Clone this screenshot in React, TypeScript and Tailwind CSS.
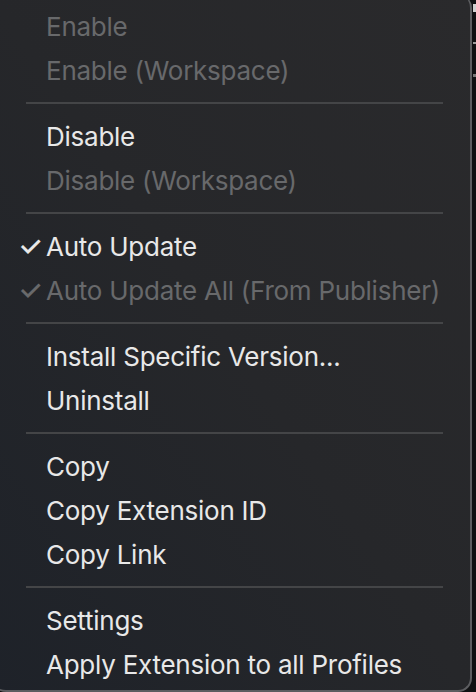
import React from 'react'

type Entry =
  | { kind: 'item'; label: string; disabled?: boolean; checked?: boolean }
  | { kind: 'sep' }

const entries: Entry[] = [
  { kind: 'item', label: 'Enable', disabled: true },
  { kind: 'item', label: 'Enable (Workspace)', disabled: true },
  { kind: 'sep' },
  { kind: 'item', label: 'Disable' },
  { kind: 'item', label: 'Disable (Workspace)', disabled: true },
  { kind: 'sep' },
  { kind: 'item', label: 'Auto Update', checked: true },
  { kind: 'item', label: 'Auto Update All (From Publisher)', checked: true, disabled: true },
  { kind: 'sep' },
  { kind: 'item', label: 'Install Specific Version...' },
  { kind: 'item', label: 'Uninstall' },
  { kind: 'sep' },
  { kind: 'item', label: 'Copy' },
  { kind: 'item', label: 'Copy Extension ID' },
  { kind: 'item', label: 'Copy Link' },
  { kind: 'sep' },
  { kind: 'item', label: 'Settings' },
  { kind: 'item', label: 'Apply Extension to all Profiles' },
]

function MenuRow({ entry }: { entry: Entry }) {
  if (entry.kind === 'sep') {
    return (
      <div className="h-[22px] flex items-center pl-[34px] pr-[27px]">
        <div className="h-[2px] w-full bg-[#444547]" />
      </div>
    )
  }
  const color = entry.disabled ? 'text-[#68696b]' : 'text-[#e8e8e8]'
  return (
    <div className={`h-[44px] flex items-center ${color}`}>
      <span className="w-[54px] pl-[26px] text-[28px] leading-none font-medium">{entry.checked ? '✓' : ''}</span>
      <span className="whitespace-nowrap">{entry.label}</span>
    </div>
  )
}

export default function App() {
  return (
    <div
      className="w-[476px] h-[692px] overflow-hidden bg-[#0f1012] flex"
      style={{ fontFamily: 'Inter, "Noto Sans", sans-serif' }}
    >
      <div className="shrink-0 w-[480px] h-[698px] -ml-[8px] -mt-[6px] rounded-[14px] border-r-2 border-b-2 border-[#5c5d60] bg-gradient-to-tr from-[#1e2229] via-[#26272a] to-[#2a2a2c] pt-[10px] text-[26px] tracking-[-0.25px]">
        {entries.map((e, i) => (
          <MenuRow key={i} entry={e} />
        ))}
      </div>
      <div className="flex flex-col gap-[30px] pt-[4px] pl-[1px]">
        <div className="w-[3px] h-[8px] bg-[#cfcfcf]" />
        <div className="w-[3px] h-[2px] bg-[#9a9a9a]" />
        <div className="w-[3px] h-[3px] bg-[#777]" />
      </div>
    </div>
  )
}
